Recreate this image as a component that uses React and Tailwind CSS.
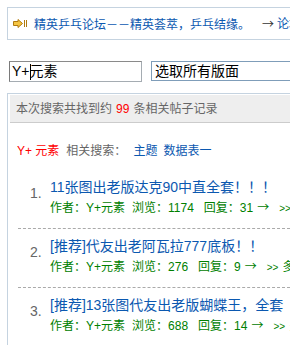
import React from 'react'

const items = [
  { no: 1, title: '11张图出老版达克90中直全套！！！', views: 1174, replies: 31 },
  { no: 2, title: '[推荐]代友出老阿瓦拉777底板！！', views: 276, replies: 9 },
  { no: 3, title: '[推荐]13张图代友出老版蝴蝶王，全套', views: 688, replies: 14 },
]

function Icon() {
  return (
    <svg width="14" height="9" viewBox="0 0 14 9" className="shrink-0">
      <path d="M0.5 2.5 H5 V0.5 L9.5 4.5 L5 8.5 V6.5 H0.5 Z" fill="#f5c542" stroke="#b07a10" strokeWidth="1" />
      <rect x="11" y="1" width="1" height="7" fill="#b07a10" />
      <rect x="13" y="1" width="1" height="7" fill="#b07a10" />
    </svg>
  )
}

export default function App() {
  return (
    <div className="w-[290px] h-[345px] overflow-hidden bg-white text-[12px] font-['Liberation_Sans','Noto_Sans_CJK_SC',sans-serif]">
      <div className="pt-[7px] pl-[7px]">
        <div className="h-[33px] border border-r-0 border-[#c5d3e0] flex items-center whitespace-nowrap pl-[5px]">
          <Icon />
          <span className="ml-[7px] text-[#0b58b0] font-['Noto_Sans_CJK_SC',sans-serif]">精英乒乓论坛－－精英荟萃，乒乓结缘。</span>
          <span className="ml-[12px] text-[#333] font-['Noto_Sans_CJK_SC',sans-serif]">→</span>
          <span className="ml-[3px] text-[#0b58b0]">论坛首页</span>
        </div>
      </div>

      <div className="flex mt-[21px] pl-[9px] gap-[9px] whitespace-nowrap">
        <div className="w-[133px] h-[21px] border border-[#a5acb2] border-l-[#7a7a7a] border-t-[#8a8a8a] flex items-center pl-[2px] text-[14px] text-black shrink-0">
          <span>Y+</span>
          <span className="inline-block w-px h-[16px] bg-black -mr-px"></span>
          <span>元素</span>
        </div>
        <div className="w-[200px] h-[20px] border border-[#7f9db9] flex items-center pl-[3px] text-[14px] text-black shrink-0">
          选取所有版面
        </div>
      </div>

      <div className="mt-[11px] ml-[7px] border-l border-t border-[#c5d3e0] h-[300px]">
        <div className="pl-[2px] pt-[1px]">
          <div className="h-[28px] bg-[#eeeeee] border-b border-[#cccccc] flex items-center pl-[6px] whitespace-nowrap text-[#666]">
            本次搜索共找到约 <span className="text-[#ff0000] mx-[4px]">99</span> 条相关帖子记录
          </div>
        </div>

        <div className="pl-[9px] mt-[20px] h-[16px] leading-[16px] whitespace-nowrap">
          <span className="text-[#ff0000]">Y+ 元素</span>
          <span className="ml-[7px] text-[#666]">相关搜索：</span>
          <span className="ml-[7px] text-[#0b58b0]">主题</span>
          <span className="ml-[6px] text-[#0b58b0]">数据表一</span>
        </div>

        <div className="mt-[11px] ml-[10px]">
          {items.map((it) => (
            <div key={it.no} className="flex pt-[7px] pb-[11px] border-b border-dashed border-[#aaaaaa] whitespace-nowrap">
              <div className="w-[32px] pl-[12px] pt-[6px] text-[14px] leading-[20px] text-[#666] shrink-0">{it.no}.</div>
              <div className="flex flex-col">
                <div className="h-[20px] leading-[20px] text-[14px] text-[#0b58b0]">{it.title}</div>
                <div className="h-[20px] leading-[20px] text-[#008000]">
                  作者：Y+元素<span className="ml-[7px]">浏览：{it.views}</span>
                  <span className="ml-[10px]">回复：{it.replies}</span>
                  <span className="ml-[4px] font-['Noto_Sans_CJK_SC',sans-serif]">→</span>
                  <span className="ml-[10px] text-[10px]">&gt;&gt;</span>
                  <span className="ml-[4px]">多</span>
                </div>
              </div>
            </div>
          ))}
        </div>
      </div>
    </div>
  )
}
